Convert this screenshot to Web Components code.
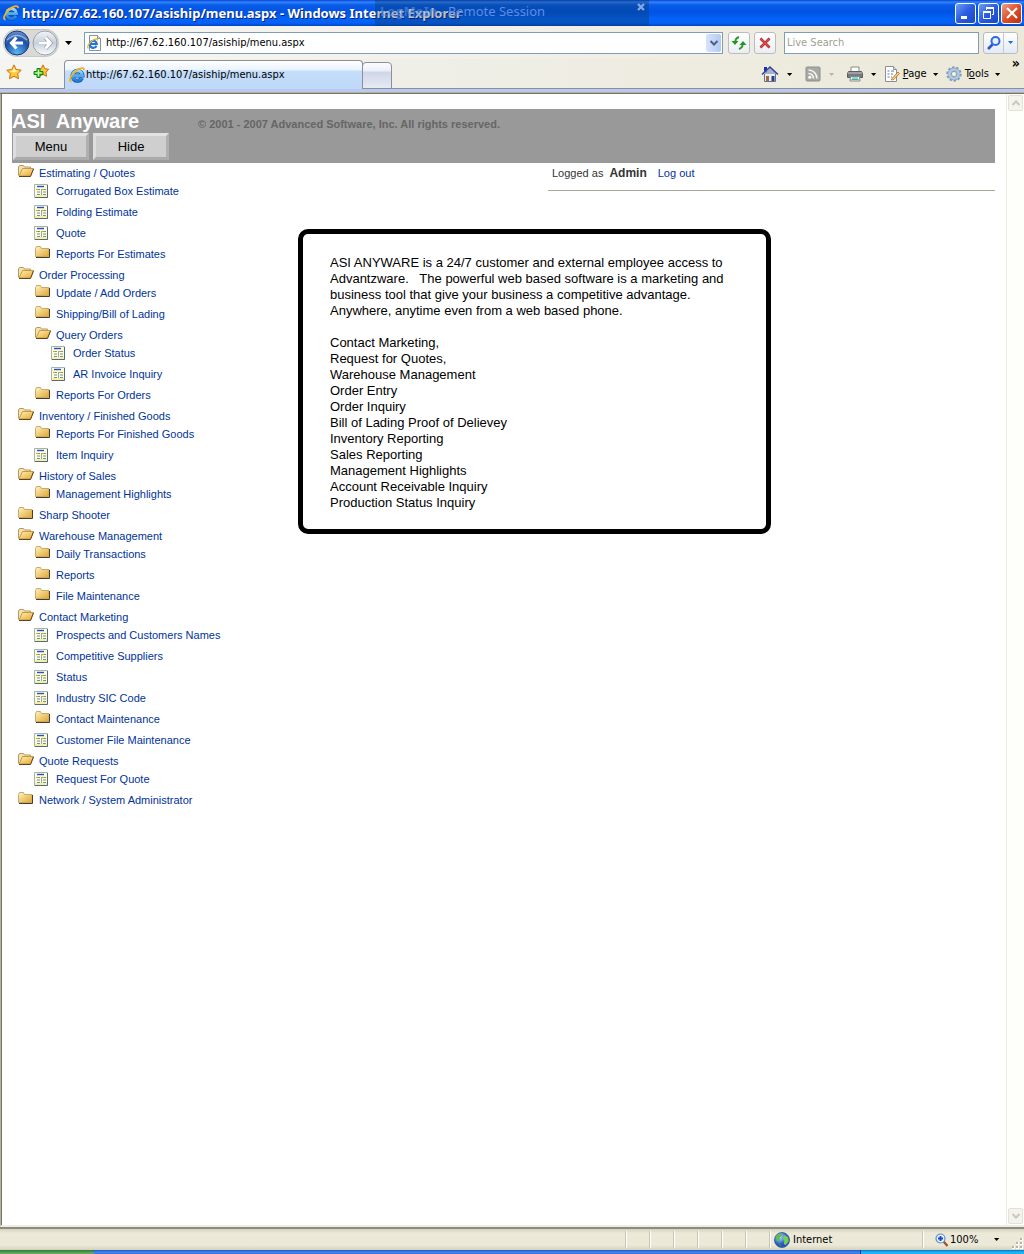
<!DOCTYPE html>
<html lang="en">
<head>
<meta charset="utf-8">
<title>http://67.62.160.107/asiship/menu.aspx</title>
<style>
html,body{margin:0;padding:0}
body{min-height:100vh;background:#fff;display:flex;flex-direction:column;font-family:"Liberation Sans",Arial,sans-serif;font-size:11px;color:#000;--ui:"DejaVu Sans Condensed","Noto Sans",sans-serif;--link:#003399}
browser-viewport{flex:1}
</style>
</head>
<body>
<title-bar heading="http://67.62.160.107/asiship/menu.aspx - Windows Internet Explorer"></title-bar>
<address-bar url="http://67.62.160.107/asiship/menu.aspx"></address-bar>
<tab-bar label="http://67.62.160.107/asiship/menu.aspx"></tab-bar>
<browser-viewport>
  <app-header slot="header">ASI&nbsp; Anyware<span slot="copy">© 2001 - 2007 Advanced Software, Inc. All rights reserved.</span></app-header>
  <menu-tree slot="menu">
    <tree-item label="Estimating / Quotes" open>
      <tree-item label="Corrugated Box Estimate" icon="doc"></tree-item>
      <tree-item label="Folding Estimate" icon="doc"></tree-item>
      <tree-item label="Quote" icon="doc"></tree-item>
      <tree-item label="Reports For Estimates"></tree-item>
    </tree-item>
    <tree-item label="Order Processing" open>
      <tree-item label="Update / Add Orders"></tree-item>
      <tree-item label="Shipping/Bill of Lading"></tree-item>
      <tree-item label="Query Orders" open>
        <tree-item label="Order Status" icon="doc"></tree-item>
        <tree-item label="AR Invoice Inquiry" icon="doc"></tree-item>
      </tree-item>
      <tree-item label="Reports For Orders"></tree-item>
    </tree-item>
    <tree-item label="Inventory / Finished Goods" open>
      <tree-item label="Reports For Finished Goods"></tree-item>
      <tree-item label="Item Inquiry" icon="doc"></tree-item>
    </tree-item>
    <tree-item label="History of Sales" open>
      <tree-item label="Management Highlights"></tree-item>
    </tree-item>
    <tree-item label="Sharp Shooter"></tree-item>
    <tree-item label="Warehouse Management" open>
      <tree-item label="Daily Transactions"></tree-item>
      <tree-item label="Reports"></tree-item>
      <tree-item label="File Maintenance"></tree-item>
    </tree-item>
    <tree-item label="Contact Marketing" open>
      <tree-item label="Prospects and Customers Names" icon="doc"></tree-item>
      <tree-item label="Competitive Suppliers" icon="doc"></tree-item>
      <tree-item label="Status" icon="doc"></tree-item>
      <tree-item label="Industry SIC Code" icon="doc"></tree-item>
      <tree-item label="Contact Maintenance"></tree-item>
      <tree-item label="Customer File Maintenance" icon="doc"></tree-item>
    </tree-item>
    <tree-item label="Quote Requests" open>
      <tree-item label="Request For Quote" icon="doc"></tree-item>
    </tree-item>
    <tree-item label="Network / System Administrator"></tree-item>
  </menu-tree>
  <user-bar name="Admin"></user-bar>
  <info-panel>
    <p>ASI ANYWARE is a 24/7 customer and external employee access to<br>Advantzware. &nbsp; The powerful web based software is a marketing and<br>business tool that give your business a competitive advantage.<br>Anywhere, anytime even from a web based phone.</p>
    <p>Contact Marketing,<br>Request for Quotes,<br>Warehouse Management<br>Order Entry<br>Order Inquiry<br>Bill of Lading Proof of Delievey<br>Inventory Reporting<br>Sales Reporting<br>Management Highlights<br>Account Receivable Inquiry<br>Production Status Inquiry</p>
  </info-panel>
</browser-viewport>
<status-bar zone="Internet" zoom="100%"></status-bar>
<task-strip></task-strip>

<script>
const ICONS = {
  ie: ['0 0 16 16', `<defs><linearGradient id="g" x1="0" y1="0" x2="0" y2="1"><stop offset="0" stop-color="#8fdcff"/><stop offset="1" stop-color="#1c78dc"/></linearGradient></defs><path d="M13 11A5 5 0 1 1 13.500 8.600H4.500" fill="none" stroke="#0b4fa8" stroke-width="4"/><path d="M13 11A5 5 0 1 1 13.500 8.600H4.500" fill="none" stroke="url(#g)" stroke-width="2.900"/><path d="M2.600 14.600C-.8 14.600 1.500 8 7 3.800 11 .8 15.400 0 15 3.200" fill="none" stroke="#f5b21e" stroke-width="1.800"/>`],
  iepage: ['0 0 16 16', `<path d="M2.500.5h8l3 3v12h-11z" fill="#fff" stroke="#8a8f99"/><path d="M10.500.5v3h3" fill="#dfe3ea" stroke="#8a8f99"/><path d="M9.500 10.800A3.500 3.500 0 1 1 9.800 9H2.800" fill="none" stroke="#1f78d8" stroke-width="2.200"/><path d="M1.500 13.500C-.5 12.500 2 8 5.500 5.500 8.500 3.500 11 3.500 10.500 5.500" fill="none" stroke="#f5b21e" stroke-width="1.300"/>`],
  star: ['0 0 16 16', `<path d="M8 .9l2.200 4.600 5 .7-3.600 3.500.9 5L8 12.300l-4.500 2.400.9-5L.8 6.200l5-.7z" fill="#ffc63a" stroke="#c9710c" stroke-linejoin="round"/><path d="M8 3l1.300 3.300 3.200.5L8 8.500 3.200 7l3.400-.6z" fill="#fff0a8"/>`],
  staradd: ['0 0 16 16', `<path d="M10 .9l1.800 3.800 3.800.6-2.700 2.900.7 4L10 10.500l-3.600 1.700.7-4L4.400 5.300l3.800-.6z" fill="#ffc63a" stroke="#c9710c" stroke-linejoin="round"/><path d="M4 4.500h3v3h3v3h-3v3h-3v-3h-3v-3h3z" fill="#62d944" stroke="#16811a"/><path d="M5.500 6v6M2.500 9h6" stroke="#c9ffb5"/>`],
  home: ['0 0 18 18', `<path d="M3.500 9v7.500h11V9L9 4z" fill="#e9ecf4" stroke="#676f8b"/><path d="M3 2h3v4l-3 2z" fill="#1c2fb4"/><path d="M9 2L5 9h11.500z" fill="#a9b0c9"/><path d="M1 9.500L9 2l8 7.500" fill="none" stroke="#34459c" stroke-width="1.600"/><path d="M5 11h3v5H5z" fill="#a16c3d"/><path d="M10.500 11h3v5h-3z" fill="#24408c"/>`],
  rss: ['0 0 16 16', `<rect x="1" y="1" width="14" height="14" rx="1" fill="#a8a8a5" stroke="#8f8f8b"/><circle cx="4.800" cy="11.300" r="1.500" fill="#fff"/><path d="M3.500 7.500a5 5 0 0 1 5 5M3.500 4a8.500 8.500 0 0 1 8.500 8.500" fill="none" stroke="#f5f5f2" stroke-width="1.700"/>`],
  print: ['0 0 16 16', `<path d="M4 6V1h8v5" fill="#fdfdfd" stroke="#888"/><path d="M1.500 5.500h13l1 2v4h-15v-4z" fill="#77797c" stroke="#5c5e60"/><path d="M1 7h14" stroke="#c4c6c8"/><path d="M3.500 10.500h9l.5 4.500H3z" fill="#eef3f6" stroke="#888"/><path d="M5 12h6M4.500 13.500h7" stroke="#38b4b0"/>`],
  page: ['0 0 16 16', `<path d="M1.500.5h8l3 3v12h-11z" fill="#fff" stroke="#8a8f99"/><path d="M9.500.5v3h3" fill="#dde2ee" stroke="#8a8f99"/><path d="M3.500 5h2M7 5h3M3.500 8h2M7 8h2M3.500 11h2M7 11h1" stroke="#5875b8"/><path d="M8 12.500L14 6l1.500 1.500-6 6.200-2 .3z" fill="#ffcf78" stroke="#a66e22" stroke-width=".8"/>`],
  gear: ['0 0 16 16', `<circle cx="8" cy="8" r="6.700" fill="none" stroke="#7f9cba" stroke-width="2" stroke-dasharray="2.400 1.800"/><circle cx="8" cy="8" r="4.600" fill="none" stroke="#7d9fc2" stroke-width="3.600"/><circle cx="8" cy="8" r="4.600" fill="none" stroke="#b4cce2" stroke-width="2.400"/><circle cx="8" cy="8" r="2.600" fill="#f2f1e8" stroke="#7290ae" stroke-width=".8"/>`],
  search: ['0 0 16 16', `<path d="M6.500 9.500L2 14" stroke="#2b56c4" stroke-width="2.600"/><circle cx="9.500" cy="6" r="4" fill="#e6f2ff" stroke="#2c69e0" stroke-width="2"/>`],
  refresh: ['0 0 18 18', `<path d="M5.500 8Q5 4.500 9 3" fill="none" stroke="#2a9a2a" stroke-width="2"/><path d="M1.500 7h7L5 11z" fill="#229622"/><path d="M12.500 10Q13 13.500 9 15" fill="none" stroke="#2a9a2a" stroke-width="2"/><path d="M9.500 11h7L13 7z" fill="#229622"/>`],
  stop: ['0 0 12 12', `<path d="M1.500 1.500l9 9M10.500 1.500l-9 9" stroke="#a31f22" stroke-width="2.600"/><path d="M1.500 1.500l9 9M10.500 1.500l-9 9" stroke="#e04c4c" stroke-width="1.400"/>`],
  down: ['0 0 8 4', `<path d="M0 0h7L3.500 4z" fill="currentColor"/>`],
  chev: ['0 0 10 10', `<path d="M1.500 3L5 6.500 8.500 3" fill="none" stroke="currentColor" stroke-width="2"/>`],
  chevup: ['0 0 10 10', `<path d="M1.500 7L5 3.500 8.500 7" fill="none" stroke="currentColor" stroke-width="2"/>`],
  min: ['0 0 14 14', `<path d="M2 10h6v3H2z" fill="#fff"/>`],
  restore: ['0 0 14 14', `<path d="M4.500 4V2.500h7v6H10" fill="none" stroke="#fff"/><path d="M4 2h8" stroke="#fff" stroke-width="2"/><path d="M1.500 6.500h7v6h-7z" fill="none" stroke="#fff"/><path d="M1 6h8" stroke="#fff" stroke-width="2"/>`],
  close: ['0 0 14 14', `<path d="M2 2l10 10M12 2L2 12" stroke="#fff" stroke-width="2.200"/>`],
  x: ['0 0 8 8', `<path d="M1 1l6 6M7 1L1 7" stroke="#87abe4" stroke-width="2.200"/>`],
  globe: ['0 0 16 16', `<defs><radialGradient id="r" cx=".35" cy=".3"><stop offset="0" stop-color="#b9dbff"/><stop offset="1" stop-color="#1f55c8"/></radialGradient></defs><circle cx="8" cy="8" r="7.500" fill="url(#r)" stroke="#34508f" stroke-width=".8"/><path d="M2 5Q4 1 8 1.500L7.500 4 5.500 6 6 9 3 9z" fill="#5fc047"/><path d="M10 3l4 2 .8 4-3 4-2-1 .5-3L9 7z" fill="#74d052"/><path d="M3.500 11l3 1 1 2.500Q5 14 3.500 11z" fill="#3d9634"/>`],
  zoom: ['0 0 14 14', `<path d="M8.500 8.500l4 4.500" stroke="#a0522d" stroke-width="2.400"/><circle cx="5.500" cy="5.500" r="4.500" fill="#e7f2ff" stroke="#5d8fce" stroke-width="1.200"/><path d="M5.500 3v5M3 5.500h5" stroke="#1746c8" stroke-width="1.800"/>`],
  grip: ['0 0 12 12', `<path d="M8 0h3v3H8zM4 4h3v3H4zM8 4h3v3H8zM0 8h3v3H0zM4 8h3v3H4zM8 8h3v3H8z" fill="#fff"/><path d="M8 0h2v2H8zM4 4h2v2H4zM8 4h2v2H8zM0 8h2v2H0zM4 8h2v2H4zM8 8h2v2H8z" fill="#b8b4a3"/>`],
  folder: ['0 0 15 12', `<defs><linearGradient id="f" x1="0" y1="0" x2="1" y2="1"><stop offset="0" stop-color="#fff3c4"/><stop offset="1" stop-color="#dfa62f"/></linearGradient></defs><path d="M.5 10.500v-8l1-2h4l1 2h7.500v8z" fill="url(#f)" stroke="#c9a868"/><path d="M1 11.500h13.500V3" fill="none" stroke="#4f3c1c"/>`],
  open: ['0 0 16 12', `<defs><linearGradient id="o" x1="0" y1="0" x2="1" y2="1"><stop offset="0" stop-color="#fff0b8"/><stop offset="1" stop-color="#e6a92c"/></linearGradient></defs><path d="M.5 10.500V2l1-1.500h4l1 1.500h6v3" fill="#f3e2ae" stroke="#b99a5c"/><path d="M1 11L4.500 3.500h11L12.500 11z" fill="url(#o)" stroke="#c59a45"/><path d="M1 11.500h11.500L15.500 4" fill="none" stroke="#5c4420"/>`],
  doc: ['0 0 14 14', `<path d="M.5.500h13v13H.5z" fill="#fffbd4" stroke="#9fb4bb"/><path d="M13.500 1v12.500H1" fill="none" stroke="#566b78"/><path d="M3 2.500h7" stroke="#2450c8" stroke-width="1.400"/><path d="M2 5.500h2M8 5.500h2" stroke="#e0a020"/><path d="M4 5.500h2M10 5.500h2M3 8h3M9 8h3M3 10.500h3M9 10.500h3" stroke="#6d93a8"/><path d="M7.500 5v6" stroke="#8fa9b5"/><path d="M1 12h12" stroke="#f4e27a"/>`],
  back: ['0 0 26 26', `<defs><radialGradient id="b" cx=".5" cy=".9" r=".9"><stop offset="0" stop-color="#57b4f4"/><stop offset=".6" stop-color="#1c4fa8"/><stop offset="1" stop-color="#6b93d0"/></radialGradient></defs><circle cx="13" cy="13" r="12" fill="url(#b)" stroke="#1d3a78"/><path d="M3 10Q13 1 23 10" fill="none" stroke="#b9cfec" stroke-width="1.500" opacity=".7"/><path d="M12.500 7.500L7.500 13l5 5.500M8 13h11" fill="none" stroke="#fff" stroke-width="3.200"/>`],
  fwd: ['0 0 26 26', `<defs><linearGradient id="w" x1="0" y1="0" x2="0" y2="1"><stop offset="0" stop-color="#f4f6f9"/><stop offset=".5" stop-color="#c6cfda"/><stop offset="1" stop-color="#fbfdff"/></linearGradient></defs><circle cx="13" cy="13" r="12" fill="url(#w)" stroke="#9aa2ae"/><path d="M13.500 7.500l5 5.500-5 5.500M18 13H7" fill="none" stroke="#8f9bab" stroke-width="4.200"/><path d="M13.500 7.500l5 5.500-5 5.500M18 13H7" fill="none" stroke="#fff" stroke-width="2.800"/>`]
};

class Base extends HTMLElement {
  connectedCallback() {
    if (this.shadowRoot) return;
    this.attachShadow({mode: 'open'}).innerHTML = '<style>*{box-sizing:border-box}button{font:inherit;color:inherit;padding:0;margin:0;border:0;background:none}:host{box-sizing:border-box}</style>' + this.render();
  }
  a(n) { return this.getAttribute(n) || ''; }
}
const define = (name, render) => customElements.define(name, class extends Base { render() { return render(this); } });

define('ui-icon', el => {
  const [box, body] = ICONS[el.a('name')];
  const [, , w, h] = box.split(' ');
  return `<style>:host{display:inline-block;flex:none;width:${el.a('w') || w}px;height:${el.a('h') || h}px}svg{display:block;width:100%;height:100%}</style><svg viewBox="${box}" aria-hidden="true">${body}</svg>`;
});

define('title-bar', el => `<style>
:host{display:flex;align-items:center;height:26px;padding:0 2px 0 3px;position:relative;background:linear-gradient(#0a3fd0 0,#2f86ff 2px,#0a5ce8 5px,#0054e3 12px,#0463f8 19px,#0562f5 23px,#0144c4 26px)}
h1{margin:0;flex:1;font:bold 13px/18px "Noto Sans",sans-serif;color:#fff;text-shadow:1px 1px 0 #0a1f7a;padding-left:3px;white-space:pre}
.win{display:flex;gap:2px}
.win button{width:21px;height:21px;border:1px solid #fff;border-radius:3px;display:grid;place-items:center;background:linear-gradient(135deg,#6f9df5,#2a5be0 50%,#1a48c4)}
.win button.c{background:linear-gradient(135deg,#f0a088,#dd4f2b 50%,#b83010)}
.remote{position:absolute;left:375px;top:0;width:274px;height:26px;background:#0a304047;border-radius:0 0 2px 2px;color:#5c8ee6;font:13px/22px "Noto Sans",sans-serif;padding-left:5px;white-space:pre}
.remote b{color:#5c8ee699}
.remote button{position:absolute;right:4px;top:3px;display:flex}
</style>
<ui-icon name="ie"></ui-icon><h1>${el.a('heading')}</h1>
<div class="remote"><b>LogMeIn</b> - Remote Session<button aria-label="Close session"><ui-icon name="x"></ui-icon></button></div>
<div class="win"><button aria-label="Minimize"><ui-icon name="min"></ui-icon></button><button aria-label="Restore"><ui-icon name="restore"></ui-icon></button><button class="c" aria-label="Close"><ui-icon name="close"></ui-icon></button></div>`);

define('address-bar', el => `<style>
:host{display:flex;align-items:center;height:33px;padding:0 6px 0 4px;font:11px/14px var(--ui);background:linear-gradient(90deg,#f6f6f4,#f1f0e9 50%,#ece9d8)}
.pill{display:flex;gap:2px;background:#d9d9d8;border-radius:14px;box-shadow:0 0 0 1px #c8c8c6}
button{display:grid;place-items:center}
.hist{width:14px;margin-left:4px}
.box{display:flex;align-items:center;height:22px;border:1px solid #7f9db9;background:#fff;min-width:0}
.addr{flex:1;margin-left:8px;padding:0 1px 0 2px}
input{border:0;outline:0;background:none;font:inherit;padding:0;margin:0;flex:1;min-width:0}
.addr input{padding-left:3px}
.drop{width:15px;height:18px;background:linear-gradient(90deg,#d7e3fb,#b4c9f2);border-radius:2px;color:#4a6185}
.sq{width:22px;height:22px;border:1px solid #b9bcc2;border-radius:3px;background:linear-gradient(#fff,#eceef2)}
.r{margin-left:5px}.s{margin-left:4px}
.find{width:195px;margin-left:8px;padding-left:2px}
.find input::placeholder{color:#a09f94;opacity:1}
.go{display:flex;margin-left:4px;border:1px solid #b9bcc2;border-radius:3px;height:22px;background:linear-gradient(#fff,#e4e9f4);color:#1d6fe0}
.go button:first-child{width:20px;border-right:1px solid #c4c8d0}.go button:last-child{width:13px}
</style>
<div class="pill"><button aria-label="Back"><ui-icon name="back"></ui-icon></button><button aria-label="Forward"><ui-icon name="fwd"></ui-icon></button></div>
<button class="hist" aria-label="Recent pages"><ui-icon name="down"></ui-icon></button>
<div class="box addr"><ui-icon name="iepage"></ui-icon><input aria-label="Address" value="${el.a('url')}"><button class="drop" aria-label="Show addresses"><ui-icon name="chev"></ui-icon></button></div>
<button class="sq r" aria-label="Refresh"><ui-icon name="refresh"></ui-icon></button>
<button class="sq s" aria-label="Stop"><ui-icon name="stop"></ui-icon></button>
<div class="box find"><input aria-label="Live Search" placeholder="Live Search"></div>
<div class="go"><button aria-label="Search"><ui-icon name="search"></ui-icon></button><button aria-label="Search options"><ui-icon name="down" w="6" h="3"></ui-icon></button></div>`);

define('tab-bar', el => `<style>
:host{display:flex;align-items:flex-end;height:35px;font:11px/14px var(--ui);background:linear-gradient(#b9c9f0,#b9c9f0) 0 30px/100% 3px no-repeat,linear-gradient(#8d8f98,#8d8f98) 0 29px/100% 1px no-repeat,linear-gradient(#77746a,#77746a) 0 34px/100% 1px no-repeat,linear-gradient(#b5b19e,#b5b19e) 0 33px/100% 1px no-repeat,linear-gradient(90deg,#f4f4f1,#efeee6 45%,#ece9d8);padding:0 4px 5px 6px}
button{display:flex;align-items:center}
.fav{display:flex;gap:11px;height:30px;align-items:center;padding-bottom:4px}
.tab{width:299px;height:29px;margin-left:15px;padding-left:4px;gap:1px;border:1px solid #8d8f98;border-bottom:0;border-radius:4px 4px 0 0;background:linear-gradient(#fff 0,#eaf3fd 9px,#c3ddfa 10px,#c0d8f9)}
.new{width:30px;height:27px;margin-left:-1px;border:1px solid #8d8f98;border-radius:4px 4px 0 0;background:linear-gradient(#fbfcfe 0,#eceff7 8px,#cfd6e8 9px,#e6eaf5)}
.cmd{flex:1;display:flex;align-items:center;justify-content:flex-end;height:30px;gap:7px}
.cmd button{gap:3px}.cmd button.m{gap:8px}
.cmd span{padding-right:3px}
.wide{margin-right:5px}
.off{color:#b7b5aa}
.cmd .more{align-self:flex-start;font:bold 14px/8px var(--ui);height:8px;margin-left:4px}
</style>
<div class="fav"><button aria-label="Favorites"><ui-icon name="star"></ui-icon></button><button aria-label="Add to favorites"><ui-icon name="staradd"></ui-icon></button></div>
<button class="tab"><ui-icon name="ie"></ui-icon><span>${el.a('label')}</span></button><button class="new" aria-label="New tab"></button>
<div class="cmd">
<button class="m wide" aria-label="Home"><ui-icon name="home"></ui-icon><ui-icon name="down" w="6" h="3"></ui-icon></button>
<button class="m off wide" aria-label="Feeds"><ui-icon name="rss"></ui-icon><ui-icon name="down" w="6" h="3"></ui-icon></button>
<button class="m" aria-label="Print"><ui-icon name="print"></ui-icon><ui-icon name="down" w="6" h="3"></ui-icon></button>
<button><ui-icon name="page"></ui-icon><span><u>P</u>age</span><ui-icon name="down" w="6" h="3"></ui-icon></button>
<button><ui-icon name="gear"></ui-icon><span>T<u>o</u>ols</span><ui-icon name="down" w="6" h="3"></ui-icon></button>
<button class="more" aria-label="More">»</button></div>`);

define('browser-viewport', () => `<style>
:host{display:flex;background:#fff;border-left:1px solid #b5b19e;border-bottom:2px solid #efede2;box-shadow:inset 1px 0 0 #77746a}
main{flex:1;padding:15px 11px 0 11px;min-width:0}
.cols{display:flex}
.menu{width:286px;flex:none}
.body{flex:1;min-width:0}
.scroll{width:18px;border-left:1px solid #eeede5;background:#fefefb;display:flex;flex-direction:column;justify-content:space-between;padding:1px 2px 1px 1px;color:#c8c8c0}
.scroll button{width:15px;height:16px;border:1px solid #e4e2d6;border-radius:2px;background:#f4f3ec;display:grid;place-items:center}
</style>
<main><slot name="header"></slot><div class="cols"><nav class="menu"><slot name="menu"></slot></nav><div class="body"><slot></slot></div></div></main>
<div class="scroll"><button aria-label="Scroll up" disabled><ui-icon name="chevup"></ui-icon></button><button aria-label="Scroll down" disabled><ui-icon name="chev"></ui-icon></button></div>`);

define('app-header', () => `<style>
:host{display:block;background:#999;height:54px}
.top{display:flex;align-items:center;height:24px}
h2{margin:0;width:186px;font:bold 20px/24px "Liberation Sans",Arial,sans-serif;color:#fff}
.copy{font:bold 11px/14px "Liberation Sans",Arial,sans-serif;color:#666;padding-top:6px}
.btns{display:flex;gap:4px;padding-left:1px}
.btns button{width:76px;height:27px;border:3px solid;border-color:#e2e2e2 #b0b0b0 #ababab #dedede;background:#cfcfcf;font:13px/18px "Liberation Sans",Arial,sans-serif;color:#000}
</style>
<div class="top"><h2><slot></slot></h2><div class="copy"><slot name="copy"></slot></div></div>
<div class="btns"><button>Menu</button><button>Hide</button></div>`);

define('menu-tree', () => `<style>:host{display:block;padding:1px 0 0 6px}</style><slot></slot>`);

define('tree-item', el => {
  const open = el.hasAttribute('open');
  const icon = el.a('icon') || (open ? 'open' : 'folder');
  const doc = icon === 'doc';
  return `<style>
:host{display:block}
.row{display:flex;align-items:flex-start;height:${open ? 18 : 21}px}
.ico{width:21px;display:flex;padding-top:${doc ? 2 : 1}px}
a{color:var(--link);text-decoration:none;font-size:11px;line-height:18px;white-space:nowrap}
.kids{padding-left:17px}
ui-icon{margin-left:${doc ? -1 : 0}px}
</style><div class="row"><span class="ico"><ui-icon name="${icon}"></ui-icon></span><a href="#">${el.a('label')}</a></div><div class="kids"><slot></slot></div>`;
});

define('user-bar', el => `<style>
:host{display:flex;gap:6px;height:28px;margin-left:250px;padding:3px 0 0 4px;border-bottom:1px solid #aca899;font-size:11px;line-height:14px;color:#333}
b{font-size:12px}
a{color:var(--link);text-decoration:none;margin-left:5px}
</style><span>Logged as</span><b>${el.a('name')}</b><a href="#">Log out</a>`);

define('info-panel', () => `<style>
:host{display:block;max-width:473px;margin-top:38px;padding:21px 20px 18px 27px;border:5px solid #000;border-radius:10px;font-size:13px;line-height:16px}
::slotted(p){margin:0 0 16px!important;white-space:nowrap}
::slotted(p:last-child){margin:0!important}
</style><slot></slot>`);

define('status-bar', el => `<style>
:host{display:flex;align-items:center;height:23px;font:11px/14px var(--ui);border-top:2px solid #8d8b80;background:linear-gradient(#d6d2c0 0,#ece9d8 4px,#ece9d8 16px,#d6d2bd)}
.sp{flex:1}
.cell{width:24px;height:17px;border-left:1px solid #c9c5b2;box-shadow:inset 1px 0 0 #fff}
.zone{display:flex;align-items:center;gap:3px;width:153px;padding-left:4px}
.zoom{display:flex;align-items:center;width:90px;padding-left:12px;gap:1px}
.zoom span{flex:1;text-align:left}
.zoom ui-icon:last-child{margin-right:12px}
.grip{align-self:flex-end;display:flex}
</style><span class="sp"></span>${'<span class="cell"></span>'.repeat(6)}
<span class="cell zone"><ui-icon name="globe"></ui-icon><span>${el.a('zone')}</span></span>
<button class="cell zoom"><ui-icon name="zoom"></ui-icon><span>${el.a('zoom')}</span><ui-icon name="down" w="6" h="3"></ui-icon></button>
<span class="grip"><ui-icon name="grip"></ui-icon></span>`);

define('task-strip', () => `<style>
:host{display:flex;height:4px;background:linear-gradient(#1f52c4,#3f86ec 2px,#3478e2)}
.start{width:94px;background:linear-gradient(#2d7a34,#6db36a);border-radius:0 3px 0 0}
.tray{width:164px;margin-left:auto;background:linear-gradient(#0b6cc4,#18b4f4 2px);border-left:1px solid #0a3f88}
</style><span class="start"></span><span class="tray"></span>`);
</script>
</body>
</html>
